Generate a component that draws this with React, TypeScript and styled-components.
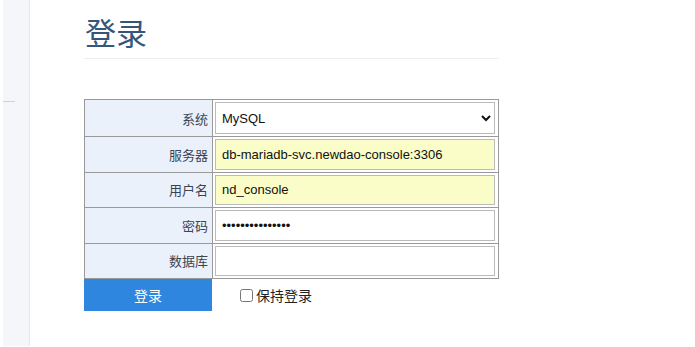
import styled, { createGlobalStyle } from "styled-components";

const GlobalStyle = createGlobalStyle`
  html, body {
    margin: 0;
    padding: 0;
    background: #fff;
    font-family: "Liberation Sans", "Noto Sans CJK SC", sans-serif;
    font-size: 13px;
    color: #333;
  }
`;

const Page = styled.div`
  display: flex;
  height: 347px;
`;

const Sidebar = styled.div`
  margin-left: 3px;
  width: 27px;
  height: 346px;
  background: #f4f6fa;
  border-right: 1px solid #e3e6eb;
  padding-top: 101px;
  box-sizing: border-box;
`;

const MenuRule = styled.div`
  width: 12px;
  height: 1px;
  background: #cfd2d6;
`;

const Content = styled.div`
  padding-left: 54px;
`;

const Title = styled.h2`
  margin: 0;
  padding: 17px 0 5px 1px;
  width: 414px;
  font-size: 31px;
  line-height: 36px;
  font-weight: normal;
  color: #34567b;
  border-bottom: 1px solid #eceef1;
`;

const Form = styled.form`
  margin-top: 40px;
`;

const Table = styled.table`
  border-collapse: collapse;
  border: 1px solid #999;
  width: 415px;
`;

const Label = styled.th`
  width: 129px;
  box-sizing: border-box;
  background: #eaf1fb;
  border: 1px solid #999;
  text-align: right;
  font-weight: normal;
  font-size: 13px;
  color: #3b4453;
  padding: 0 4px 0 0;
`;

const Cell = styled.td`
  border: 1px solid #999;
  padding: 2px 3px 2px 2px;
`;

const Field = styled.input<{ $filled?: boolean }>`
  display: block;
  box-sizing: border-box;
  width: 280px;
  height: 30.5px;
  margin: 0;
  padding: 0 6px;
  border: 1px solid #bbb;
  background: ${(p) => (p.$filled ? "#fafdc8" : "#fff")};
  font-family: "Liberation Sans", "Noto Sans CJK SC", sans-serif;
  font-size: 13px;
  color: #111;
  outline: none;
`;

const Select = styled.select`
  display: block;
  box-sizing: border-box;
  width: 280px;
  height: 32px;
  margin: 0;
  padding: 0 2px;
  border: 1px solid #bbb;
  border-radius: 0;
  background: #fff;
  font-family: "Liberation Sans", "Noto Sans CJK SC", sans-serif;
  font-size: 13px;
  color: #111;
`;

const Actions = styled.div`
  display: flex;
  align-items: center;
`;

const Submit = styled.button`
  width: 128px;
  height: 32px;
  border: 0;
  margin: 0;
  background: #2e86de;
  color: #fff;
  font-family: "Liberation Sans", "Noto Sans CJK SC", sans-serif;
  font-size: 14px;
  cursor: pointer;
`;

const Remember = styled.label`
  display: flex;
  align-items: center;
  margin-left: 27px;
  font-size: 14px;
  color: #222;

  input {
    width: 13px;
    height: 13px;
    margin: 0 3px 0 1px;
  }
`;

const rows = [
  { label: "服务器", value: "db-mariadb-svc.newdao-console:3306", filled: true },
  { label: "用户名", value: "nd_console", filled: true },
  { label: "密码", value: "nd_console_pass", filled: false, type: "password" },
  { label: "数据库", value: "", filled: false },
];

export default function App() {
  return (
    <>
      <GlobalStyle />
      <Page>
        <Sidebar>
          <MenuRule />
        </Sidebar>
        <Content>
          <Title>登录</Title>
          <Form onSubmit={(e) => e.preventDefault()}>
            <Table>
              <tbody>
                <tr>
                  <Label>系统</Label>
                  <Cell>
                    <Select defaultValue="server">
                      <option value="server">MySQL</option>
                      <option value="sqlite">SQLite 3</option>
                      <option value="pgsql">PostgreSQL</option>
                    </Select>
                  </Cell>
                </tr>
                {rows.map((r) => (
                  <tr key={r.label}>
                    <Label>{r.label}</Label>
                    <Cell>
                      <Field
                        $filled={r.filled}
                        type={r.type ?? "text"}
                        defaultValue={r.value}
                      />
                    </Cell>
                  </tr>
                ))}
              </tbody>
            </Table>
            <Actions>
              <Submit type="submit">登录</Submit>
              <Remember>
                <input type="checkbox" />
                保持登录
              </Remember>
            </Actions>
          </Form>
        </Content>
      </Page>
    </>
  );
}
